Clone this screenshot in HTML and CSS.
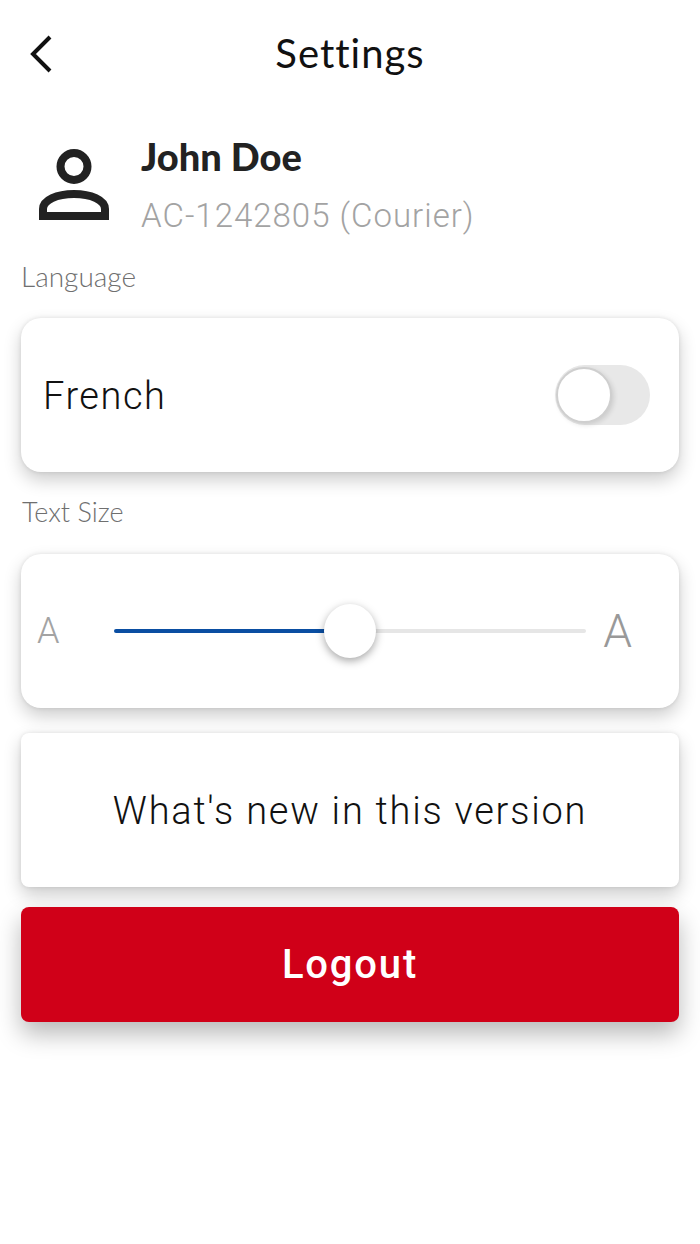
FILE: index.html
```html
<!DOCTYPE html>
<html lang="en">
<head>
  <meta charset="UTF-8">
  <title>Settings</title>
  <link rel="stylesheet" href="styles.css">
</head>
<body>
  <div class="header">
    <svg class="back" width="24" height="38" viewBox="0 0 24 38"><path d="M21 2 L4 19 L21 36" fill="none" stroke="#111" stroke-width="4"/></svg>
    <h1>Settings</h1>
  </div>

  <div class="profile">
    <svg class="avatar" width="70" height="72" viewBox="0 0 70 72">
      <circle cx="35" cy="17.500" r="13.500" fill="none" stroke="#222" stroke-width="8"/>
      <path d="M4 67 V60 C4 51 18 45 35 45 C52 45 66 51 66 60 V67 Z" fill="none" stroke="#222" stroke-width="8"/>
    </svg>
    <div class="profile-text">
      <div class="name">John Doe</div>
      <div class="account">AC-1242805 (Courier)</div>
    </div>
  </div>

  <div class="section-label label-language">Language</div>
  <div class="card row">
    <span class="card-text">French</span>
    <div class="toggle"><div class="toggle-knob"></div></div>
  </div>

  <div class="section-label label-size">Text Size</div>
  <div class="card row">
    <span class="a-small">A</span>
    <div class="slider">
      <div class="slider-fill"></div>
      <div class="slider-rest"></div>
      <div class="slider-knob"></div>
    </div>
    <span class="a-large">A</span>
  </div>

  <div class="card whats-new">What's new in this version</div>
  <div class="logout">Logout</div>
</body>
</html>
```

FILE: styles.css
```css
html, body { min-height: 1244px; }
body { margin: 0; background: #fff; font-family: "Roboto", sans-serif; color: #1c1c1c; }
h1 { margin: 0; font-family: "Lato", sans-serif; font-size: 40px; font-weight: 400; letter-spacing: 1px; color: #111; line-height: 46px; }

.header { height: 105px; padding-bottom: 2px; display: flex; align-items: center; justify-content: center; position: relative; }
.back { position: absolute; left: 29px; top: 35px; }

.profile { display: flex; padding: 0 0 0 39px; height: 128px; }
.avatar { margin-top: 42px; flex-shrink: 0; }
.profile-text { margin-left: 32px; padding-top: 26px; }
.name { font-family: "Lato", sans-serif; font-size: 38px; font-weight: 900; line-height: 46px; color: #222; }
.account { font-size: 33px; font-weight: 300; line-height: 44px; margin-top: 15px; letter-spacing: 1px; color: #a3a3a3; }

.section-label { font-family: "Lato", sans-serif; font-size: 28px; font-weight: 300; color: #6f6f6f; line-height: 32px; }
.label-language { margin: 25px 0 26px 21px; }
.label-size { margin: 24px 0 26px 22px; font-size: 27px; }

.card { margin: 0 21px; background: #fff; border-radius: 20px; box-shadow: 0 8px 18px rgba(0,0,0,0.2), 0 0 4px rgba(0,0,0,0.1); height: 154px; }
.row { display: flex; align-items: center; justify-content: space-between; }
.card-text { font-size: 38px; font-weight: 300; margin-left: 22px; padding-top: 2px; letter-spacing: 1.500px; color: #111; }

.toggle { width: 95px; height: 60px; margin-right: 29px; border-radius: 30px; background: #e8e8e8; position: relative; }
.toggle-knob { position: absolute; left: 1px; top: 2px; width: 52px; height: 52px; background: #fff; border: 2px solid #cfcfcf; border-radius: 50%; box-shadow: 2px 2px 5px rgba(0,0,0,0.12); }

.a-small { font-size: 36px; font-weight: 300; color: #a3a3a3; margin-left: 16px; }
.a-large { font-size: 46px; font-weight: 300; color: #999; margin-right: 47px; }
.slider { flex: 1; display: flex; align-items: center; height: 54px; margin: 0 17px 0 54px; position: relative; }
.slider-fill { width: 50%; height: 4px; background: #0a4ea2; border-radius: 2px; }
.slider-rest { width: 50%; height: 4px; background: #e6e6e6; border-radius: 2px; }
.slider-knob { position: absolute; left: 50%; top: 0; margin-left: -26px; width: 52px; height: 54px; border-radius: 50%; background: #fff; box-shadow: 0 3px 8px rgba(0,0,0,0.35); }

.whats-new { margin-top: 25px; border-radius: 8px; display: flex; align-items: center; justify-content: center; padding-top: 2px; box-sizing: border-box; font-size: 38px; font-weight: 300; letter-spacing: 1.750px; color: #111; }
.logout { margin: 20px 21px 0; height: 115px; background: #d00018; border-radius: 8px; color: #fff; display: flex; align-items: center; justify-content: center; font-size: 40px; font-weight: 500; letter-spacing: 1.800px; box-shadow: 0 12px 24px rgba(0,0,0,0.28); }
```
